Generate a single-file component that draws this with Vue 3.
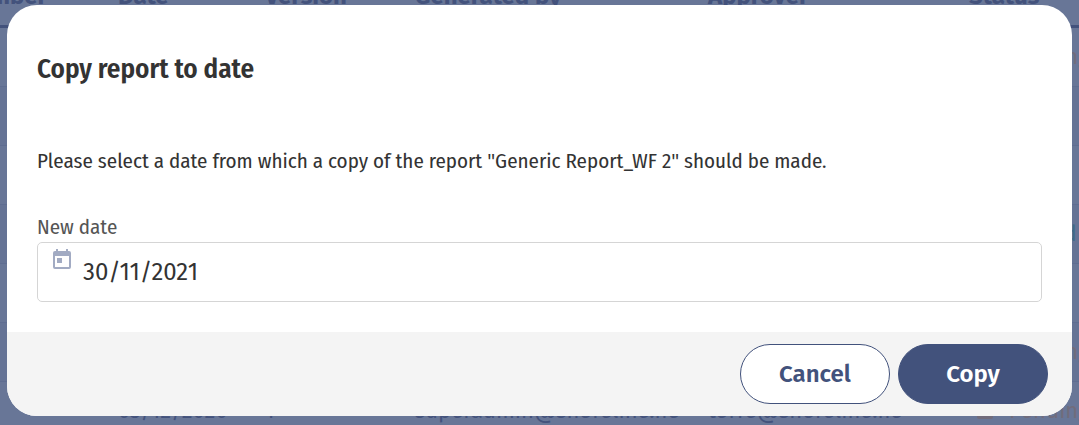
<script setup>
import { ref } from 'vue'

const newDate = ref('30/11/2021')
const columns = ['Number', 'Date', 'Version', 'Generated by', 'Approver', 'Status']
const pending = { label: 'Pending', kind: 'pending' }
const signed = { label: 'Signed', kind: 'signed' }
const none = { label: '', kind: '' }
const rows = [
  { status: pending },
  { status: none },
  { status: none },
  { status: signed },
  { status: none },
  { status: pending },
  { date: '03/12/2020', version: '1', author: 'superadmin@shoreline.no', approver: 'torre@shoreline.no', status: pending },
]
</script>

<template>
  <main class="page">
    <div class="backdrop" aria-hidden="true">
      <table class="reports">
        <colgroup>
          <col class="c-number"><col class="c-date"><col class="c-version"><col class="c-author"><col class="c-approver"><col>
        </colgroup>
        <thead>
          <tr><th v-for="column in columns" :key="column">{{ column }}</th></tr>
        </thead>
        <tbody>
          <tr v-for="(row, i) in rows" :key="i">
            <td></td>
            <td>{{ row.date }}</td>
            <td>{{ row.version }}</td>
            <td>{{ row.author }}</td>
            <td>{{ row.approver }}</td>
            <td>
              <span v-if="row.status.label" class="status" :class="row.status.kind">
                <i class="mark"></i>{{ row.status.label }}
              </span>
            </td>
          </tr>
        </tbody>
      </table>
    </div>

    <form class="dialog" role="dialog" aria-labelledby="dialog-title" @submit.prevent>
      <div class="body">
        <h1 id="dialog-title">Copy report to date</h1>
        <p>Please select a date from which a copy of the report "Generic Report_WF 2" should be made.</p>
        <label for="new-date">New date</label>
        <div class="field">
          <svg class="calendar" viewBox="0 0 18 20" aria-hidden="true">
            <path fill-rule="evenodd" d="M3 0h2v2h8V0h2v2h1a2 2 0 0 1 2 2v14a2 2 0 0 1-2 2H2a2 2 0 0 1-2-2V4a2 2 0 0 1 2-2h1zM2 7v11h14V7zM4 9h5v5H4z" />
          </svg>
          <input id="new-date" v-model="newDate" type="text">
        </div>
      </div>
      <footer class="actions">
        <button type="button" class="cancel">Cancel</button>
        <button type="submit" class="copy">Copy</button>
      </footer>
    </form>
  </main>
</template>

<style>
body {
  background: #687697;
}
</style>

<style scoped>
.page {
  position: relative;
  min-height: 100vh;
  box-sizing: border-box;
  padding: 5px 7px 9px;
  overflow: hidden;
  font-family: "Fira Sans", "Noto Sans", sans-serif;
  color: #333;
}
.backdrop {
  position: absolute;
  inset: -34px 0 0 -48px;
  overflow: hidden;
  background: #687697;
}
.reports {
  width: 100%;
  table-layout: fixed;
  border-collapse: separate;
  border-spacing: 0;
  font-size: 22px;
  line-height: 24px;
  color: #43527c;
}
.c-number { width: 158px; }
.c-date { width: 147px; }
.c-version { width: 150px; }
.c-author { width: 293px; }
.c-approver { width: 261px; }
.reports th,
.reports td {
  box-sizing: border-box;
  height: 59px;
  padding: 0 8px;
  text-align: left;
  white-space: nowrap;
}
.reports th {
  height: 62px;
  border-bottom: 3px solid #43527c;
  font-size: 24px;
}
.reports td {
  border-bottom: 1px solid #5f6d91;
}
.reports tbody tr:nth-child(even) {
  background: #657395;
}
.status {
  display: flex;
  align-items: center;
  gap: 16px;
  margin-left: 8px;
}
.mark {
  flex: none;
  width: 16px;
  height: 16px;
  border-radius: 2px;
  background: currentColor;
}
.pending { color: #716c7c; }
.signed { color: #3f6a87; }

.dialog {
  position: relative;
  overflow: hidden;
  border-radius: 30px;
  background: #fff;
}
.body {
  padding: 48px 30px 30px;
}
h1,
p,
label {
  font-family: "Fira Sans Condensed", "Fira Sans", "Noto Sans", sans-serif;
}
h1 {
  margin: 0 0 64px;
  font-size: 27px;
  font-weight: 600;
  line-height: 32px;
}
p {
  margin: 0 0 42px;
  font-size: 21px;
  line-height: 24px;
}
label {
  display: block;
  margin-bottom: 3px;
  font-size: 21px;
  line-height: 24px;
  color: #555;
}
.field {
  display: flex;
  box-sizing: border-box;
  height: 60px;
  padding: 0 15px;
  gap: 12px;
  border: 1px solid #d5d5d5;
  border-radius: 5px;
}
.calendar {
  width: 18px;
  height: 20px;
  margin-top: 6px;
  fill: #a2abc3;
}
input {
  flex: 1;
  min-width: 0;
  padding: 0;
  border: 0;
  outline: 0;
  background: transparent;
  font: 24px "Fira Sans", "Noto Sans", sans-serif;
  color: #333;
}
.actions {
  display: flex;
  justify-content: flex-end;
  gap: 8px;
  padding: 12px 24px;
  background: #f4f4f4;
}
button {
  width: 150px;
  height: 60px;
  padding: 0;
  border: 1px solid #42527c;
  border-radius: 30px;
  font: 600 24px "Fira Sans", "Noto Sans", sans-serif;
}
.cancel {
  background: #fff;
  color: #42527c;
}
.copy {
  background: #42527c;
  color: #fff;
}
</style>
